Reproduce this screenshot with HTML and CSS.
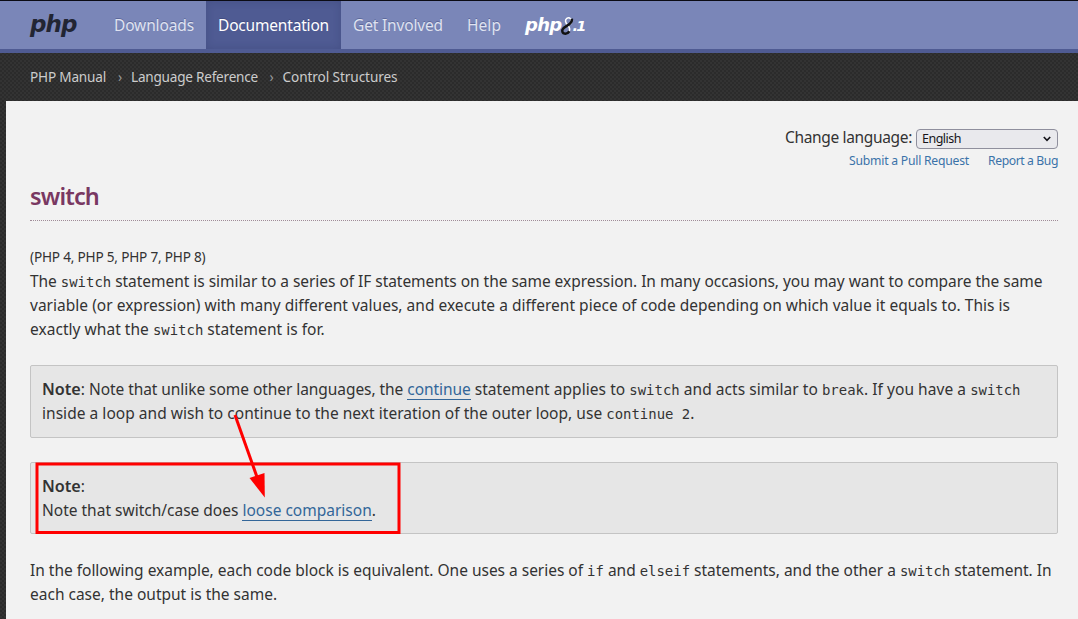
FILE: index.html
```html
<!DOCTYPE html>
<html lang="en">
<head>
<meta charset="utf-8">
<title>PHP: switch - Manual</title>
<link rel="stylesheet" href="styles.css">
</head>
<body>
<header class="navbar">
  <a class="brand">php</a>
  <nav class="menu">
    <a class="item downloads">Downloads</a>
    <a class="item active docs">Documentation</a>
    <a class="item involved">Get Involved</a>
    <a class="item help">Help</a>
  </nav>
  <a class="release"><span class="release-php">php</span><svg class="ribbon" width="14" height="20" viewBox="0 0 14 20"><path d="M10.500 8C13.200 3.500 9.500 .8 6.800 2.400C4.500 4 5.600 6.800 7.500 9C10.200 12 10 14.500 8.500 16" fill="none" stroke="#fff" stroke-width="1.500"/><path d="M11.800 2.800C13.200 9 4 9.700 2.500 13.600C1.200 18 6.700 19.200 9.400 15.200" fill="none" stroke="#111" stroke-width="2.500"/></svg><span class="release-num">.1</span></a>
</header>
<div class="crumbs">
  <a class="manual">PHP Manual</a><i>›</i>
  <a class="langref">Language Reference</a><i>›</i>
  <a class="control">Control Structures</a>
</div>
<main class="page">
  <div class="tools">
    <div class="language"><label>Change language:</label>
      <button class="select"><span>English</span><svg width="8" height="6" viewBox="0 0 8 6"><path d="M.8 1L4 4.400L7.200 1" fill="none" stroke="#15141a" stroke-width="1.600"/></svg></button></div>
    <div class="edit"><a class="pull">Submit a Pull Request</a><a class="bug">Report a Bug</a></div>
  </div>
  <h1>switch</h1>
  <p class="version">(PHP 4, PHP 5, PHP 7, PHP 8)</p>
  <p class="para intro">
    <span class="snug">The <code>switch</code> statement is similar to a series of IF statements on the same expression. In many occasions, you may want to compare the same</span><br>
    <span class="loose">variable (or expression) with many different values, and execute a different piece of code depending on which value it equals to. This is</span><br>
    <span class="looser">exactly what the <code>switch</code> statement is for.</span>
  </p>
  <div class="note first">
    <strong>Note</strong>: <span class="snug">Note that unlike some other languages, the <a>continue</a></span> <span class="loose">statement applies to <code>switch</code> and acts similar to <code>break</code>. If you have a <code>switch</code></span><br>
    <span class="looser">inside a loop and wish to continue to the next iteration of the outer loop, use <code>continue 2</code>.</span>
  </div>
  <div class="note second">
    <strong>Note</strong>:<br>
    Note that switch/case does <a>loose comparison</a>.
    <svg class="mark" width="370" height="124" viewBox="0 0 370 124"><rect x="4" y="52" width="362" height="68.500" fill="none" stroke="#f00" stroke-width="3"/><path d="M202 3L224 65" stroke="#f00" stroke-width="3"/><path d="M216.500 66L231.500 61L231.800 85.500Z" fill="#f00"/></svg>
  </div>
  <p class="para">
    <span class="tight">In the following example, each code block is equivalent. One uses a series of <code>if</code> and <code>elseif</code> statements, and the other a <code>switch</code> statement. In</span><br>
    each case, the output is the same.
  </p>
</main>
</body>
</html>
```
FILE: styles.css
```css
* { box-sizing: border-box; }
body { margin: 0; height: 619px; overflow: hidden; color: #333; font: 15.5px/24px "Noto Sans", sans-serif;
  background: repeating-conic-gradient(#2b2b2b 0 25%, #333 0 50%) 0 0 / 4px 4px; }
a { color: #369; text-decoration: none; white-space: nowrap; }
p, .note { white-space: nowrap; }
.navbar { height: 53px; display: flex; background: #7a86b8; border-top: 1px solid #0b0b14; border-bottom: 4px solid #4f5b93; }
.brand { width: 102px; padding-left: 30px; color: #222533; font: italic bold 23px/47px "DejaVu Sans", sans-serif; letter-spacing: -.9px; }
.menu { display: flex; }
.item { padding: 0 12px; line-height: 49px; color: #dfe2f0; text-shadow: 0 -1px 0 rgba(40,50,100,.35); }
.downloads { width: 104px; letter-spacing: -.132px; }
.docs { width: 135px; letter-spacing: -.183px; }
.involved { width: 114px; letter-spacing: -.158px; }
.help { width: 58px; letter-spacing: .059px; }
.item.active { color: #fff; background: #4f5b93; box-shadow: inset 0 0 8px rgba(30,35,80,.2); }
.release { display: flex; padding-left: 12px; color: #fff; font: italic bold 18px/48px "DejaVu Sans", sans-serif; letter-spacing: -.7px; }
.ribbon { margin: 15px -2px 0 -1px; }
.release-num { font-size: 14.500px; line-height: 51px; letter-spacing: -1.700px; }
.crumbs { height: 48px; padding-left: 30px; display: flex; line-height: 47px; font-size: 13.6px; }
.crumbs a { color: #ccc; }
.crumbs i { width: 25px; padding-left: 12px; font-style: normal; color: #999; }
.crumbs .manual { width: 76px; letter-spacing: -.195px; }
.crumbs .langref { width: 126.500px; letter-spacing: -.232px; }
.crumbs .control { letter-spacing: -.082px; }
.page { margin-left: 6px; height: 518px; padding: 24px 20px 0 24px; background: #f2f2f2; }
.tools { height: 59px; }
.language { height: 26px; display: flex; justify-content: flex-end; gap: 4px; letter-spacing: -.342px; }
.select { display: flex; align-items: center; justify-content: space-between; width: 142px; height: 20px; margin-top: 4px; padding: 0 6px 0 5px; border: 1px solid #8f8f9d; border-radius: 4px; background: #e9e9ed; color: #15141a; font: 12.5px/18px "Noto Sans", sans-serif; letter-spacing: -.504px; }
.edit { display: flex; justify-content: flex-end; gap: 19px; font-size: 12.2px; line-height: 19px; }
.edit a { color: #3b72a9; }
.pull { letter-spacing: -.228px; }
.bug { letter-spacing: -.408px; }
h1 { margin: 0 0 24px; height: 37px; border-bottom: 1px dotted #a08c98; color: #793862; font-size: 23.5px; line-height: 25px; font-weight: 600; letter-spacing: -.846px; }
.version { margin: 0; font-size: 13.6px; line-height: 24px; letter-spacing: -.197px; }
.para { margin: 0; }
.intro { margin-bottom: 24px; }
.tight { letter-spacing: -.016px; }
.snug { letter-spacing: -.038px; }
.loose { letter-spacing: .021px; }
.looser { letter-spacing: .035px; }
code { font: 13.95px/1 "DejaVu Sans Mono", monospace; letter-spacing: 0; }
.note { padding: 11px 11px; border: 1px solid #c4c4c4; border-radius: 2px; background: #e6e6e6; margin-bottom: 24px; }
.first { height: 73px; }
.first .snug { letter-spacing: -.06px; }
.second { position: relative; height: 72px; }
.note strong { font-size: 16.200px; line-height: 20px; font-weight: 600; letter-spacing: -.04px; }
.note a { display: inline-block; height: 23px; border-bottom: 1px solid #369; line-height: 24px; vertical-align: top; }
.first .loose { letter-spacing: .055px; }
.mark { position: absolute; left: 2px; top: -51px; }
```
